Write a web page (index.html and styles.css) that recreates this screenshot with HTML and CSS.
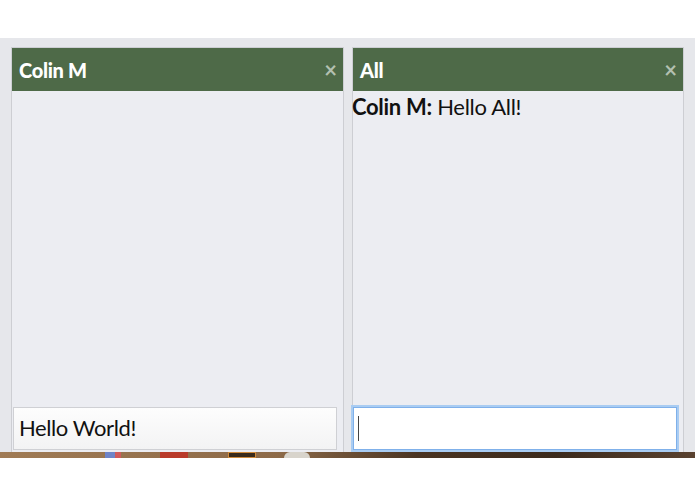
FILE: index.html
```html
<!DOCTYPE html>
<html>
<head>
<meta charset="utf-8">
<link rel="stylesheet" href="styles.css">
</head>
<body>
<div class="top"></div>
<div class="stage">
  <div class="panel panel-a">
    <div class="head"><span class="title">Colin M</span><span class="close">×</span></div>
    <div class="body">
      <div class="messages"></div>
      <div class="input filled">Hello World!</div>
    </div>
  </div>
  <div class="panel panel-b">
    <div class="head"><span class="title">All</span><span class="close">×</span></div>
    <div class="body">
      <div class="messages"><div class="msg"><b>Colin M:</b> Hello All!</div></div>
      <div class="input focused"><span class="caret"></span></div>
    </div>
  </div>
</div>
<div class="dock">
  <span class="d d1"></span><span class="d d2"></span><span class="d d3"></span><span class="d d4"></span><span class="d d5"></span>
</div>
</body>
</html>
```

FILE: styles.css
```css
html, body { margin: 0; padding: 0; background: #ffffff; }
body { font-family: Lato, "Noto Sans", sans-serif; width: 695px; height: 494px; overflow: hidden; }
.top { height: 38px; background: #ffffff; }
.stage {
  height: 414px;
  background: #e6e7eb;
  display: flex;
  gap: 8px;
  padding: 9px 11px 0 11px;
  box-sizing: border-box;
}
.panel {
  display: flex;
  flex-direction: column;
  background: #ecedf2;
  border: 1px solid #cdced3;
  border-bottom: none;
  box-sizing: border-box;
}
.panel-a { width: 333px; }
.panel-b { width: 332px; }
.head {
  height: 43px;
  background: #4e6a48;
  display: flex;
  align-items: center;
  justify-content: space-between;
  padding: 0 6px 0 7px;
  flex: none;
}
.title { color: #ffffff; font-weight: 900; font-size: 20px; letter-spacing: -0.3px; }
.close { color: #b3c0b1; font-size: 22px; font-weight: 700; line-height: 1; }
.body { flex: 1; display: flex; flex-direction: column; }
.messages { flex: 1; }
.msg { font-size: 22px; color: #111; padding: 2px 0 0 0; margin-left: -1px; letter-spacing: -0.3px; }
.msg b { font-weight: 700; }
.input {
  height: 43px;
  box-sizing: border-box;
  margin: 0 0 2px 1px;
  display: flex;
  align-items: center;
  font-size: 22px;
  color: #111;
}
.input.filled {
  width: 324px;
  background: linear-gradient(#fdfdfd, #f3f3f4);
  border: 1px solid #cfd0d4;
  padding: 0 0 2px 5px;
  letter-spacing: -0.4px;
}
.input.focused {
  width: 324px;
  background: #ffffff;
  border: 1px solid #7fb0ea;
  box-shadow: 0 0 0 2px #a9ccf2;
  margin-left: 0;
  padding-left: 4px;
}
.caret { display: block; width: 1px; height: 25px; background: #444; }
.dock {
  height: 6px;
  background: linear-gradient(90deg, #a07b55 0%, #8d6a48 40%, #4a3422 60%, #3b2a1c 80%, #5a4230 100%);
  position: relative;
}
.d { position: absolute; top: 0; height: 6px; }
.d1 { left: 105px; width: 10px; background: #6e84c8; }
.d2 { left: 160px; width: 28px; background: #b93a2a; }
.d3 { left: 228px; width: 28px; background: #3a2a1a; border: 1px solid #d08a3a; box-sizing: border-box; }
.d4 { left: 284px; width: 26px; background: #d8d4cc; border-radius: 6px 6px 0 0; }
.d5 { left: 115px; width: 6px; background: #d05a5a; }
```
